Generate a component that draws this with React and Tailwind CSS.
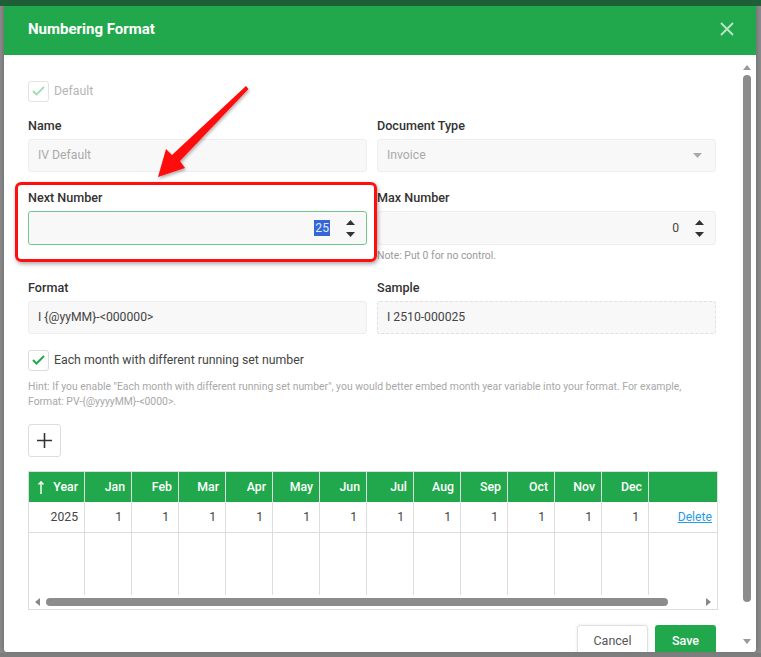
import React from "react";

const months = ["Jan","Feb","Mar","Apr","May","Jun","Jul","Aug","Sep","Oct","Nov","Dec"];

function Spinner() {
  return (
    <div className="flex flex-col items-center justify-center gap-[7px] w-[16px]">
      <svg width="9" height="5" viewBox="0 0 9 5"><path d="M0 5 L4.5 0 L9 5 Z" fill="#333" /></svg>
      <svg width="9" height="5" viewBox="0 0 9 5"><path d="M0 0 L4.5 5 L9 0 Z" fill="#333" /></svg>
    </div>
  );
}

function Label({ children }) {
  return <div className="text-[12.6px] font-medium text-[#333] leading-[18px] mb-[4px]">{children}</div>;
}

export default function App() {
  return (
    <div className="relative w-[761px] h-[657px] overflow-hidden bg-[#8d8d8d]" style={{ fontFamily: "Roboto, 'Liberation Sans', sans-serif" }}>
      {/* backdrop page hints */}
      <div className="absolute inset-x-0 top-0 h-[6px] bg-[#1f5f37]" />
      <div className="absolute left-0 right-0 top-[653px] h-[4px] bg-[#7d7d7d]" />

      <div className="pt-[3px] pl-[4px]">
        <div className="w-[752px] h-[649px] bg-white rounded-[3px] overflow-hidden flex flex-col shadow-[0_0_6px_rgba(0,0,0,0.3)]">
          {/* header */}
          <div className="h-[52px] shrink-0 bg-[#22a84c] flex items-center justify-between pl-[24px] pr-[22px]">
            <div className="text-white text-[15px] font-bold">Numbering Format</div>
            <svg width="14" height="14" viewBox="0 0 14 14">
              <path d="M1 1 L13 13 M13 1 L1 13" stroke="#bfe6cb" strokeWidth="1.8" />
            </svg>
          </div>
          {/* body */}
          <div className="flex flex-1 min-h-0">
            <div className="flex-1 pl-[24px] pr-[23px] pt-[25px] overflow-hidden">
              {/* default checkbox */}
              <div className="flex items-center gap-[5px] h-[22px]">
                <div className="w-[21px] h-[21px] border border-[#e3e3e3] rounded-[3px] flex items-center justify-center">
                  <svg width="13" height="10" viewBox="0 0 13 10"><path d="M1 5 L4.5 8.5 L12 1" stroke="#a5dcb3" strokeWidth="1.8" fill="none" /></svg>
                </div>
                <span className="text-[12.3px] text-[#b5b5b5]">Default</span>
              </div>

              <div className="grid grid-cols-2 gap-x-[10px] mt-[15px]">
                <div>
                  <Label>Name</Label>
                  <div className="h-[33px] bg-[#f8f8f8] border border-[#eeeeee] rounded-[3px] flex items-center px-[9px] text-[12.2px] text-[#aaaaaa]">IV Default</div>
                </div>
                <div>
                  <Label>Document Type</Label>
                  <div className="h-[33px] bg-[#f8f8f8] border border-[#eeeeee] rounded-[3px] flex items-center justify-between px-[9px] text-[12.2px] text-[#aaaaaa]">
                    <span>Invoice</span>
                    <svg width="9" height="5" viewBox="0 0 9 5" className="mr-[4px]"><path d="M0 0 L4.5 5 L9 0 Z" fill="#aaa" /></svg>
                  </div>
                </div>

                <div className="mt-[17px]">
                  <Label>Next Number</Label>
                  <div className="h-[34px] bg-[#f8f8f8] border border-[#70c98a] rounded-[3px] flex items-center justify-end pr-[8px] text-[12.2px] text-[#333]">
                    <span className="bg-[#3566d6] text-[#dfe8ff] px-[1px] leading-[16px]">25</span>
                    <div className="ml-[12px]"><Spinner /></div>
                  </div>
                </div>
                <div className="mt-[17px]">
                  <Label>Max Number</Label>
                  <div className="h-[34px] bg-[#f8f8f8] border border-[#eeeeee] rounded-[3px] flex items-center justify-end pr-[8px] text-[12.2px] text-[#444]">
                    <span>0</span>
                    <div className="ml-[12px]"><Spinner /></div>
                  </div>
                  <div className="text-[10.4px] text-[#9a9a9a] mt-[4px] leading-[14px]">Note: Put 0 for no control.</div>
                </div>

                <div className="mt-[16px]">
                  <Label>Format</Label>
                  <div className="h-[33px] bg-[#f8f8f8] border border-[#eeeeee] rounded-[3px] flex items-center px-[9px] text-[12.2px] text-[#444]">{"I {@yyMM}-<000000>"}</div>
                </div>
                <div className="mt-[16px]">
                  <Label>Sample</Label>
                  <div className="h-[33px] bg-[#f8f8f8] border border-dashed border-[#e0e0e0] rounded-[3px] flex items-center px-[9px] text-[12.2px] text-[#444]">I 2510-000025</div>
                </div>
              </div>

              {/* each month checkbox */}
              <div className="flex items-center gap-[5px] h-[22px] mt-[15px]">
                <div className="w-[21px] h-[21px] border border-[#dcdcdc] rounded-[3px] flex items-center justify-center">
                  <svg width="13" height="10" viewBox="0 0 13 10"><path d="M1 5 L4.5 8.5 L12 1" stroke="#22a84c" strokeWidth="2" fill="none" /></svg>
                </div>
                <span className="text-[12.3px] text-[#444]">Each month with different running set number</span>
              </div>
              <div className="text-[10.4px] text-[#a8a8a8] leading-[15px] mt-[8px]">
                Hint: If you enable "Each month with different running set number", you would better embed month year variable into your format. For example,<br />
                Format: PV-{"{@yyyyMM}-<0000>"}.
              </div>

              {/* plus button */}
              <div className="mt-[15px] w-[33px] h-[33px] border border-[#dddddd] rounded-[3px] flex items-center justify-center">
                <svg width="15" height="15" viewBox="0 0 15 15"><path d="M7.5 0 V15 M0 7.5 H15" stroke="#333" strokeWidth="1.6" /></svg>
              </div>

              {/* table */}
              <div className="mt-[14px] w-[690px] border border-[#dddddd]">
                <div className="flex h-[30px] bg-[#22a84c] text-white text-[12.3px] font-medium">
                  <div className="w-[56px] border-r border-[#dddddd] flex items-center justify-end pr-[6px] gap-[9px]">
                    <svg width="6" height="13" viewBox="0 0 6 13"><path d="M3 13 V1 M0.5 3.5 L3 0.8 L5.5 3.5" stroke="white" strokeWidth="1.4" fill="none" /></svg>
                    <span>Year</span>
                  </div>
                  {months.map((m) => (
                    <div key={m} className="w-[47px] border-r border-[#dddddd] flex items-center justify-end pr-[6px]">{m}</div>
                  ))}
                  <div className="flex-1" />
                </div>
                <div className="flex h-[31px] text-[12.2px] text-[#444] border-b border-[#dddddd]">
                  <div className="w-[56px] border-r border-[#dddddd] flex items-center justify-end pr-[6px]">2025</div>
                  {months.map((m) => (
                    <div key={m} className="w-[47px] border-r border-[#dddddd] flex items-center justify-end pr-[9px]">1</div>
                  ))}
                  <div className="flex-1 flex items-center justify-end pr-[5px]">
                    <span className="text-[#2b9be8] underline">Delete</span>
                  </div>
                </div>
                <div className="flex h-[62px]">
                  <div className="w-[56px] border-r border-[#dddddd]" />
                  {months.map((m) => (
                    <div key={m} className="w-[47px] border-r border-[#dddddd]" />
                  ))}
                  <div className="flex-1" />
                </div>
                <div className="h-[14px] flex items-center px-[6px] gap-[6px] bg-white">
                  <svg width="5" height="8" viewBox="0 0 5 8"><path d="M5 0 L0 4 L5 8 Z" fill="#888" /></svg>
                  <div className="w-[622px] h-[8px] rounded-full bg-[#8c8c8c]" />
                  <div className="flex-1" />
                  <svg width="5" height="8" viewBox="0 0 5 8"><path d="M0 0 L5 4 L0 8 Z" fill="#888" /></svg>
                </div>
              </div>

              {/* footer */}
              <div className="flex justify-end gap-[7px] mt-[15px]">
                <div className="w-[71px] h-[33px] border border-[#e0e0e0] rounded-[3px] flex items-center justify-center text-[12.5px] text-[#555] shadow-[0_0_3px_rgba(0,0,0,0.1)]">Cancel</div>
                <div className="w-[61px] h-[33px] bg-[#22a84c] rounded-[3px] flex items-center justify-center text-[12.5px] font-medium text-white">Save</div>
              </div>
            </div>
            {/* vertical scrollbar */}
            <div className="w-[16px] shrink-0 flex flex-col items-center pt-[10px] pb-[8px] mr-[1px]">
              <svg width="8" height="5" viewBox="0 0 8 5"><path d="M0 5 L4 0 L8 5 Z" fill="#999" /></svg>
              <div className="w-[8px] h-[527px] mt-[5px] rounded-full bg-[#8c8c8c]" />
              <div className="flex-1" />
              <svg width="8" height="5" viewBox="0 0 8 5"><path d="M0 0 L4 5 L8 0 Z" fill="#999" /></svg>
            </div>
          </div>
        </div>
      </div>

      {/* annotation: red box */}
      <div className="absolute left-[15px] top-[182px] w-[362px] h-[80px] border-[3px] border-[#ff1010] rounded-[6px] shadow-[1px_2px_4px_rgba(0,0,0,0.35)]" />
      {/* annotation: arrow */}
      <svg className="absolute left-0 top-0" width="761" height="657" viewBox="0 0 761 657" style={{ pointerEvents: "none" }}>
        <defs>
          <filter id="sh" x="-20%" y="-20%" width="140%" height="140%">
            <feDropShadow dx="1" dy="2" stdDeviation="1.5" floodColor="#000" floodOpacity="0.3" />
          </filter>
        </defs>
        <polygon points="246,86 248.5,89 180,161 185,168 158,177 166,149 172,155" fill="#ff0a0a" filter="url(#sh)" />
      </svg>
    </div>
  );
}
